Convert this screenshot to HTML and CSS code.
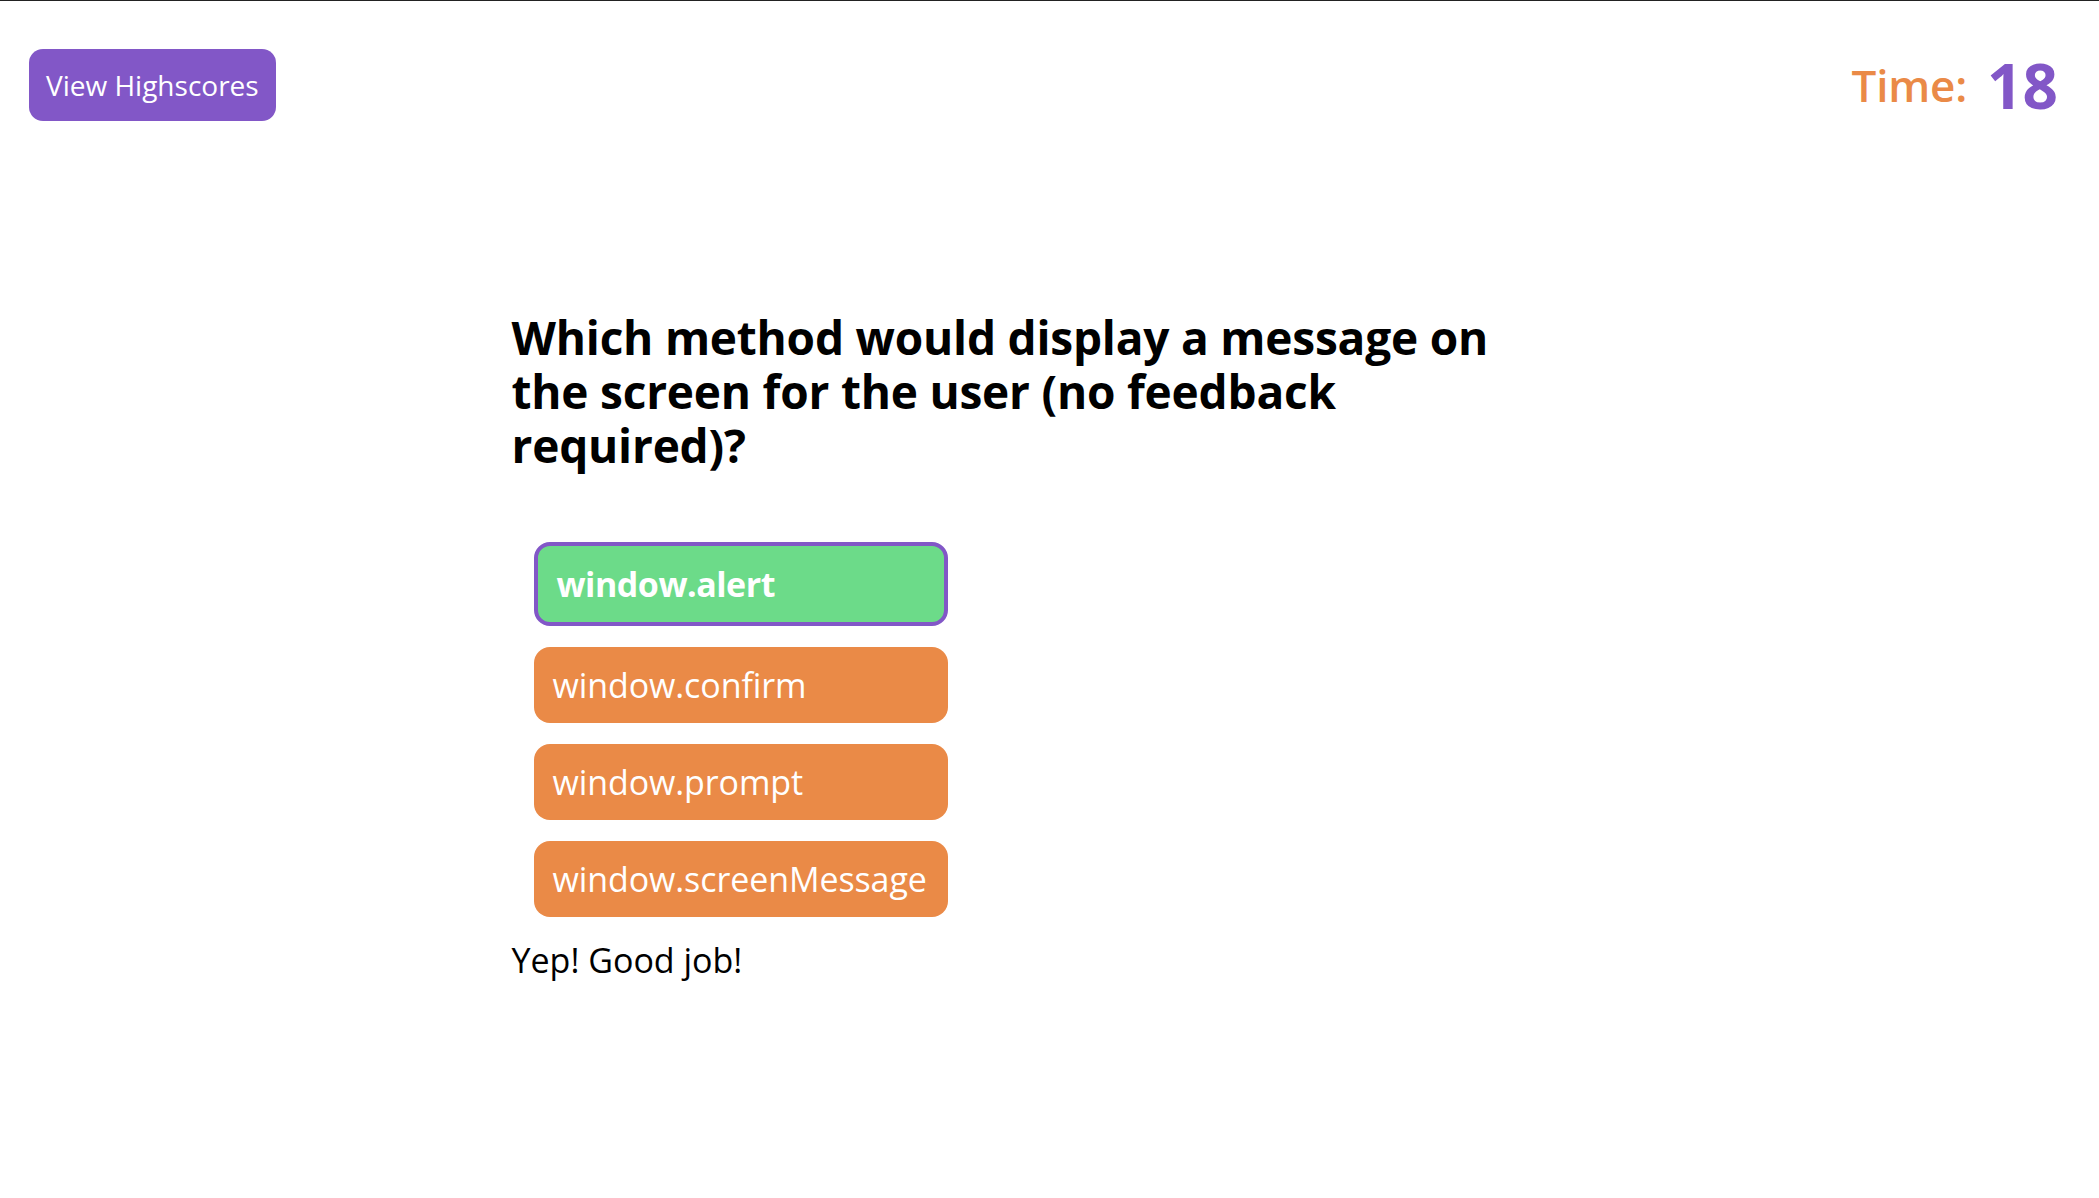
FILE: index.html
```html
<!DOCTYPE html>
<html lang="en">
<head>
<meta charset="utf-8">
<title>Code Quiz</title>
<link rel="stylesheet" href="styles.css">
</head>
<body>
<div class="page">
  <header class="topbar">
    <button class="hs-btn" type="button">View Highscores</button>
    <div class="timer">
      <span class="timer-label">Time:</span>
      <span class="timer-value">18</span>
    </div>
  </header>
  <main class="quiz">
    <h2 class="question">Which method would display a message on the screen for the user (no feedback required)?</h2>
    <div class="answers">
      <button class="answer answer-correct" type="button">window.alert</button>
      <button class="answer" type="button">window.confirm</button>
      <button class="answer" type="button">window.prompt</button>
      <button class="answer" type="button">window.screenMessage</button>
    </div>
    <p class="feedback">Yep! Good job!</p>
  </main>
</div>
</body>
</html>
```

FILE: styles.css
```css
html, body {
  margin: 0;
  padding: 0;
  background: #ffffff;
}

body {
  font-family: "Open Sans", "Noto Sans", "DejaVu Sans", sans-serif;
  color: #000;
}

.page {
  border-top: 1px solid #222;
  min-height: 1197px;
}

.topbar {
  display: flex;
  justify-content: space-between;
  align-items: center;
  padding: 42px 41px 0 29px;
}

.hs-btn {
  background: #8257c7;
  color: #fff;
  border: none;
  border-radius: 14px;
  height: 72px;
  padding: 0 17px;
  font-family: inherit;
  font-size: 28px;
  letter-spacing: 0;
}

.timer {
  display: flex;
  align-items: center;
  gap: 20px;
}

.timer-label {
  color: #ea8a47;
  font-size: 44px;
  font-weight: 600;
  letter-spacing: -0.2px;
}

.timer-value {
  color: #8257c7;
  font-size: 62px;
  font-weight: 700;
}

.quiz {
  width: 1076px;
  margin: 0 auto;
  padding-top: 183px;
}

.question {
  max-width: 1030px;
  margin: 0;
  font-size: 46px;
  line-height: 54px;
  font-weight: 700;
  letter-spacing: -0.2px;
}

.answers {
  display: flex;
  flex-direction: column;
  gap: 21px;
  width: 414px;
  margin: 70px 0 0 22px;
}

.answer {
  display: block;
  width: 100%;
  height: 76px;
  box-sizing: border-box;
  padding: 0 19px;
  border: none;
  border-radius: 16px;
  background: #ea8a47;
  color: #fff;
  font-family: inherit;
  font-size: 34px;
  text-align: left;
  letter-spacing: -0.1px;
  white-space: nowrap;
}

.answer-correct {
  height: 84px;
  background: #6cdb89;
  border: 4px solid #8257c7;
  padding-left: 19px;
  font-weight: 700;
  letter-spacing: -0.5px;
}

.feedback {
  margin: 20px 0 0 0;
  font-size: 34px;
  letter-spacing: 0;
}
```
